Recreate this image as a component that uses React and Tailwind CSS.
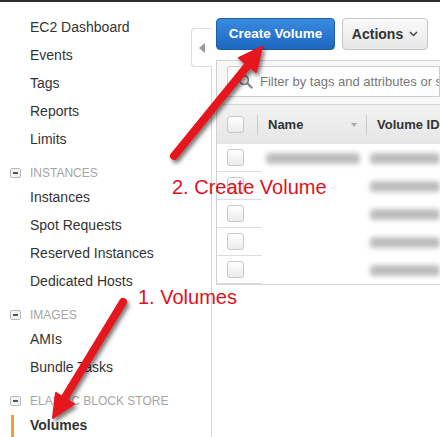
import React from 'react';

const font = { fontFamily: '"Liberation Sans", Arial, sans-serif' };

// ─── Sidebar bits ─────────────────────────────────────────────
const Item = ({ children, active }) => (
  <div className="relative h-[28px] flex items-center pl-[30px] text-[14px] text-[#333]">
    {active && <span className="absolute left-[11px] top-[4px] h-[24px] w-[3px] bg-[#f0a030]" />}
    <span className={active ? 'font-bold' : ''}>{children}</span>
  </div>
);

const Group = ({ children }) => (
  <div className="mt-[10px] h-[20px] flex items-center pl-[10px] text-[12px] text-[#a5a5a5]">
    <span className="w-[11px] h-[10px] border border-[#bbb] rounded-[2px] bg-[#f3f3f3] flex items-center justify-center mr-[9px]">
      <span className="block w-[5px] h-[1.5px] bg-[#555]" />
    </span>
    {children}
  </div>
);

const Check = () => (
  <span className="block w-[17px] h-[17px] rounded-[3px] border border-[#c8c8c8] bg-gradient-to-b from-white to-[#ececec]" />
);

const Blur = ({ w }) => (
  <span className="block h-[11px] rounded-sm bg-[#bdbdbd] blur-[2.5px]" style={{ width: w }} />
);

// ─── Arrow overlay ────────────────────────────────────────────
const Arrows = () => (
  <svg className="absolute inset-0 pointer-events-none" width="440" height="437">
    <defs>
      <filter id="sh" x="-20%" y="-20%" width="140%" height="140%">
        <feDropShadow dx="2" dy="3" stdDeviation="2.2" floodColor="#000" floodOpacity="0.55" />
      </filter>
    </defs>
    <g filter="url(#sh)" fill="#e5141c" stroke="#e5141c">
      <line x1="174" y1="154" x2="249" y2="62" strokeWidth="8" strokeLinecap="round" />
      <polygon points="262,45 256,70 239,56" strokeWidth="2" strokeLinejoin="round" />
      <line x1="123" y1="300" x2="64" y2="397" strokeWidth="8" strokeLinecap="round" />
      <polygon points="53,416 56,391 74,402" strokeWidth="2" strokeLinejoin="round" />
    </g>
  </svg>
);

export default function App() {
  const rows = [0, 1, 2, 3, 4];
  return (
    <div className="relative w-[440px] h-[437px] overflow-hidden bg-white border-t-2 border-[#2e2e2e]" style={font}>
      <div className="flex h-full">
        {/* sidebar */}
        <div className="w-[211px] shrink-0 pt-[11px]">
          <Item>EC2 Dashboard</Item>
          <Item>Events</Item>
          <Item>Tags</Item>
          <Item>Reports</Item>
          <Item>Limits</Item>
          <Group>INSTANCES</Group>
          <Item>Instances</Item>
          <Item>Spot Requests</Item>
          <Item>Reserved Instances</Item>
          <Item>Dedicated Hosts</Item>
          <Group>IMAGES</Group>
          <Item>AMIs</Item>
          <Item>Bundle Tasks</Item>
          <Group>ELASTIC BLOCK STORE</Group>
          <Item active>Volumes</Item>
        </div>

        {/* main */}
        <div className="relative flex-1 min-w-0 pl-[5px] pt-[16px]">
          <div className="absolute left-0 top-[64px] bottom-0 w-px bg-[#d5d5d5]" />
          <div className="absolute -left-[20px] top-[26px] w-[21px] h-[39px] rounded-l-[4px] border border-r-0 border-[#ddd] bg-white flex items-center justify-center">
            <span className="block w-0 h-0 border-y-[5px] border-y-transparent border-r-[6px] border-r-[#999]" />
          </div>

          <div className="flex gap-[7px]">
            <button className="w-[119px] h-[32px] rounded-[4px] border border-[#1a5fa8] bg-gradient-to-b from-[#3a8ae0] to-[#1d68c0] text-white font-bold text-[13.5px]">
              Create Volume
            </button>
            <button className="w-[86px] h-[32px] rounded-[4px] border border-[#c6c6c6] bg-gradient-to-b from-[#fafafa] to-[#e6e6e6] text-[#333] font-bold text-[14px] flex items-center justify-center gap-[6px]">
              Actions
              <svg width="9" height="6" viewBox="0 0 9 6"><path d="M1 1l3.5 3.5L8 1" fill="none" stroke="#444" strokeWidth="1.4" /></svg>
            </button>
          </div>

          <div className="mt-[10px] border-t border-l border-[#d0d0d0]">
            <div className="h-[43px] bg-[#f7f7f7] pl-[10px] pt-[5px]">
              <div className="h-[31px] bg-white border border-[#ccc] rounded-l-[3px] flex items-center pl-[10px] gap-[7px] text-[13px] text-[#777] whitespace-nowrap overflow-hidden">
                <svg width="15" height="15" viewBox="0 0 15 15" className="shrink-0">
                  <circle cx="6" cy="6" r="4.3" fill="none" stroke="#888" strokeWidth="1.8" />
                  <path d="M9.2 9.2l4.3 4.3" stroke="#888" strokeWidth="2.4" strokeLinecap="round" />
                </svg>
                Filter by tags and attributes or s
              </div>
            </div>
            <div className="h-[40px] border-t border-[#d6d6d6] bg-gradient-to-b from-[#f2f2f2] to-[#e6e6e6] flex items-center text-[13px] font-bold text-[#333] whitespace-nowrap">
              <div className="w-[40px] pl-[10px]"><Check /></div>
              <div className="w-px h-[20px] bg-[#ccc]" />
              <div className="w-[108px] pl-[10px] flex items-center justify-between pr-[9px]">
                Name
                <span className="block w-0 h-0 border-x-[3.5px] border-x-transparent border-t-[4px] border-t-[#aaa]" />
              </div>
              <div className="w-px h-[20px] bg-[#ccc]" />
              <div className="pl-[10px]">Volume ID</div>
            </div>
            {rows.map(i => (
              <div key={i} className="h-[28px] flex items-center">
                <div className="w-[48px] h-full pl-[10px] flex items-center border-b border-[#ddd]"><Check /></div>
                <div className="w-[110px] pl-[4px]">{i === 0 && <Blur w={94} />}</div>
                <div className="pl-[6px]"><Blur w={70} /></div>
              </div>
            ))}
            <div className="h-px bg-[#d6d6d6]" />
          </div>
        </div>
      </div>

      <Arrows />
      <div className="absolute left-[172px] top-[173px] text-[20px] text-[#e0101b] leading-[24px]">2. Create Volume</div>
      <div className="absolute left-[138px] top-[283px] text-[20px] text-[#e0101b] leading-[24px]">1. Volumes</div>
    </div>
  );
}
